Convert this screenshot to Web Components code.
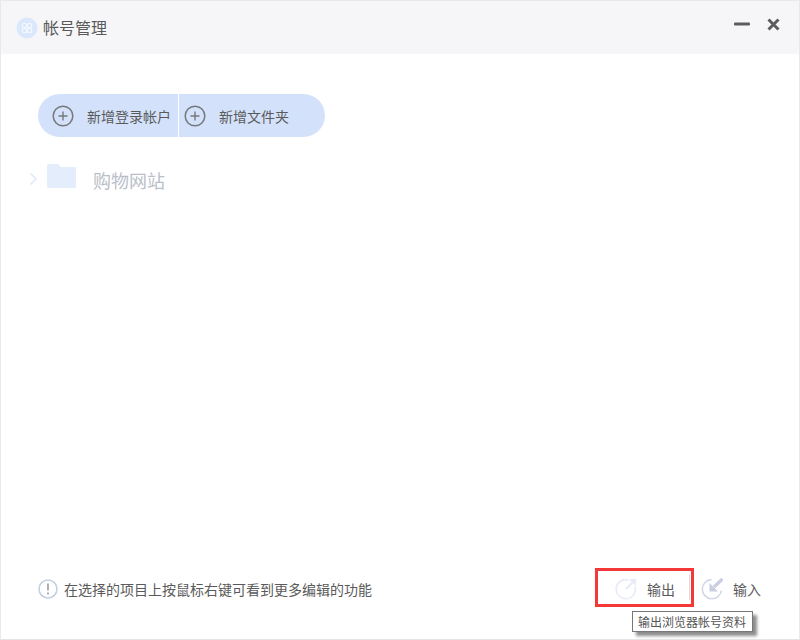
<!DOCTYPE html>
<html lang="zh-CN">
  <head>
    <meta charset="UTF-8" />
    <title>帐号管理</title>
    <style>
      html, body { margin: 0; height: 100%; background: #fff; }
      body { font-family: "Noto Sans CJK SC", "Liberation Sans", sans-serif; }
    </style>
  </head>
  <body>
    <account-window>
      <title-bar slot="top" heading="帐号管理"></title-bar>
      <div slot="actions" style="display:flex">
        <add-button label="新增登录帐户" kind="left"></add-button>
        <add-button label="新增文件夹" kind="right"></add-button>
      </div>
      <folder-row slot="tree" name="购物网站"></folder-row>
      <window-footer slot="bottom"></window-footer>
    </account-window>

    <script>
      // Outer frame of the dialog
      class AccountWindow extends HTMLElement {
        constructor() {
          super();
          this.attachShadow({ mode: "open" });
          this.shadowRoot.innerHTML = `
            <style>
              :host { display: flex; flex-direction: column; box-sizing: border-box; width: 800px; height: 640px;
                border: 1px solid #e9e9ec; border-bottom-color: #e4e4e6; overflow: hidden; position: relative; }
              .actions { padding: 40px 0 0 37px; }
              .tree { padding: 26px 0 0 28px; }
              .spacer { flex: 1; }
            </style>
            <slot name="top"></slot>
            <div class="actions"><slot name="actions"></slot></div>
            <div class="tree"><slot name="tree"></slot></div>
            <div class="spacer"></div>
            <slot name="bottom"></slot>
          `;
        }
      }
      customElements.define("account-window", AccountWindow);

      class TitleBar extends HTMLElement {
        constructor() {
          super();
          this.attachShadow({ mode: "open" });
        }
        connectedCallback() {
          this.shadowRoot.innerHTML = `
            <style>
              :host { display: flex; align-items: center; height: 53px; background: #f6f6f8; padding: 0 19px 0 15px;
                color: #5a5a5a; font-size: 16px; }
              .logo { display: block; margin-right: 5px; }
              .title { flex: 1; line-height: 53px; }
              .btns { display: flex; align-items: center; gap: 17px; padding-bottom: 7px; }
              svg { display: block; }
            </style>
            <svg class="logo" width="22" height="22" viewBox="0 0 22 22">
              <circle cx="11" cy="11" r="10.5" fill="#dbe7fb"/>
              <g fill="none" stroke="#f3f7fe" stroke-width="1.2">
                <rect x="6.5" y="6.5" width="4" height="4" rx="1"/>
                <rect x="11.5" y="6.5" width="4" height="4" rx="1"/>
                <rect x="6.5" y="11.5" width="4" height="4" rx="1"/>
                <rect x="11.5" y="11.5" width="4" height="4" rx="1"/>
              </g>
            </svg>
            <div class="title">${this.getAttribute("heading")}</div>
            <div class="btns">
              <svg width="16" height="12" viewBox="0 0 16 12"><rect x="0" y="4.5" width="16" height="3" rx="1" fill="#5c5c5f"/></svg>
              <svg width="13" height="13" viewBox="0 0 13 13"><path d="M1.5 1.5L11.5 11.5M11.5 1.5L1.5 11.5" stroke="#5c5c5f" stroke-width="3" fill="none"/></svg>
            </div>
          `;
        }
      }
      customElements.define("title-bar", TitleBar);

      // Half of the pill shaped button, kind says which end is rounded
      class AddButton extends HTMLElement {
        constructor() {
          super();
          this.attachShadow({ mode: "open" });
        }
        connectedCallback() {
          const left = this.getAttribute("kind") === "left";
          this.shadowRoot.innerHTML = `
            <style>
              :host { display: flex; align-items: center; box-sizing: border-box; height: 43px; background: #d3e2fa;
                color: #5a5a5a; font-size: 14px; white-space: nowrap;
                width: ${left ? 141 : 146}px; padding-left: ${left ? 14 : 5}px;
                border-radius: ${left ? "22px 0 0 22px" : "0 22px 22px 0"};
                ${left ? "border-right: 1px solid #fff;" : ""} }
              svg { display: block; margin-right: 13px; flex: none; }
            </style>
            <svg width="22" height="22" viewBox="0 0 22 22" fill="none" stroke="#77787c">
              <circle cx="11" cy="11" r="9.8" stroke-width="1.5"/>
              <path d="M11 6.5V15.5M6.5 11H15.5" stroke-width="1.4"/>
            </svg>
            <span>${this.getAttribute("label")}</span>
          `;
        }
      }
      customElements.define("add-button", AddButton);

      class FolderRow extends HTMLElement {
        constructor() {
          super();
          this.attachShadow({ mode: "open" });
        }
        connectedCallback() {
          this.shadowRoot.innerHTML = `
            <style>
              :host { display: flex; align-items: center; height: 30px; color: #b9bec8; font-size: 18px; }
              svg { display: block; flex: none; }
              .arrow { margin-right: 9px; margin-top: 2px; }
              .folder { margin-right: 17px; margin-top: -4px; }
              span { padding-top: 4px; }
            </style>
            <svg class="arrow" width="9" height="14" viewBox="0 0 9 14" fill="none" stroke="#dbe6f8" stroke-width="1.4"><path d="M1.5 1.5L7 7L1.5 12.5"/></svg>
            <svg class="folder" width="29" height="24" viewBox="0 0 29 24"><path d="M1.5 0H11L14 3H27.5A1.5 1.5 0 0 1 29 4.5V22.5A1.5 1.5 0 0 1 27.5 24H1.5A1.5 1.5 0 0 1 0 22.5V1.5A1.5 1.5 0 0 1 1.5 0Z" fill="#e3edfc"/></svg>
            <span>${this.getAttribute("name")}</span>
          `;
        }
      }
      customElements.define("folder-row", FolderRow);

      class WindowFooter extends HTMLElement {
        constructor() {
          super();
          this.attachShadow({ mode: "open" });
          this.shadowRoot.innerHTML = `
            <style>
              :host { display: flex; align-items: center; height: 36px; padding: 0 38px 32px 37px; color: #5a5a5a; font-size: 14px; }
              svg { display: block; flex: none; }
              .hint { flex: 1; display: flex; align-items: center; gap: 6px; }
              .item { display: flex; align-items: center; white-space: nowrap; }
              .out { margin-right: 26px; }
              .out svg { margin-right: 10px; }
              .in svg { margin-right: 10px; }
              /* red mark drawn over the screenshot */
              .mark { position: absolute; left: 594px; top: 567px; width: 93px; height: 33px; border: 3px solid #f43838; }
              .sep { position: absolute; left: 688px; top: 574px; width: 1px; height: 25px; background: #d8dbe2; }
              .tip { position: absolute; left: 631px; top: 610px; box-sizing: border-box; height: 21px; padding: 0 6px 0 5px;
                line-height: 20px; font-size: 12px; color: #555; background: #fff; border: 1px solid #77777a;
                box-shadow: 4px 4px 3px rgba(0,0,0,.45); white-space: nowrap; }
            </style>
            <div class="hint">
              <svg width="20" height="20" viewBox="0 0 20 20" fill="none">
                <circle cx="10" cy="10" r="9" stroke="#c3d0e2" stroke-width="1.6"/>
                <path d="M10 4.5V11.5" stroke="#9a9ca3" stroke-width="1.6"/>
                <path d="M10 13.5V15.5" stroke="#9a9ca3" stroke-width="1.6"/>
              </svg>
              <span>在选择的项目上按鼠标右键可看到更多编辑的功能</span>
            </div>
            <div class="item out">
              <svg width="22" height="22" viewBox="0 0 22 22" fill="none" stroke="#e6ebf6" stroke-width="1.6">
                <path d="M13.5 2A9.6 9.6 0 1 0 20 8.5"/>
                <path d="M11 11L17 5" stroke-width="2.2"/>
                <path d="M21.5 0.5L20.5 8L14 1.5Z" fill="#e6ebf6" stroke="none"/>
              </svg>
              <span>输出</span>
            </div>
            <div class="item in">
              <svg width="22" height="22" viewBox="0 0 22 22" fill="none" stroke="#d4d7e8" stroke-width="1.6">
                <path d="M10.5 1.6A9.6 9.6 0 1 0 20.4 12.5"/>
                <path d="M21.5 1L13 9" stroke="#c9cde2" stroke-width="3.4"/>
                <path d="M8.5 13.5L8.5 5L17 13.5Z" fill="#c9cde2" stroke="none"/>
              </svg>
              <span>输入</span>
            </div>
            <div class="mark"></div>
            <div class="sep"></div>
            <div class="tip">输出浏览器帐号资料</div>
          `;
        }
      }
      customElements.define("window-footer", WindowFooter);
    </script>
  </body>
</html>
